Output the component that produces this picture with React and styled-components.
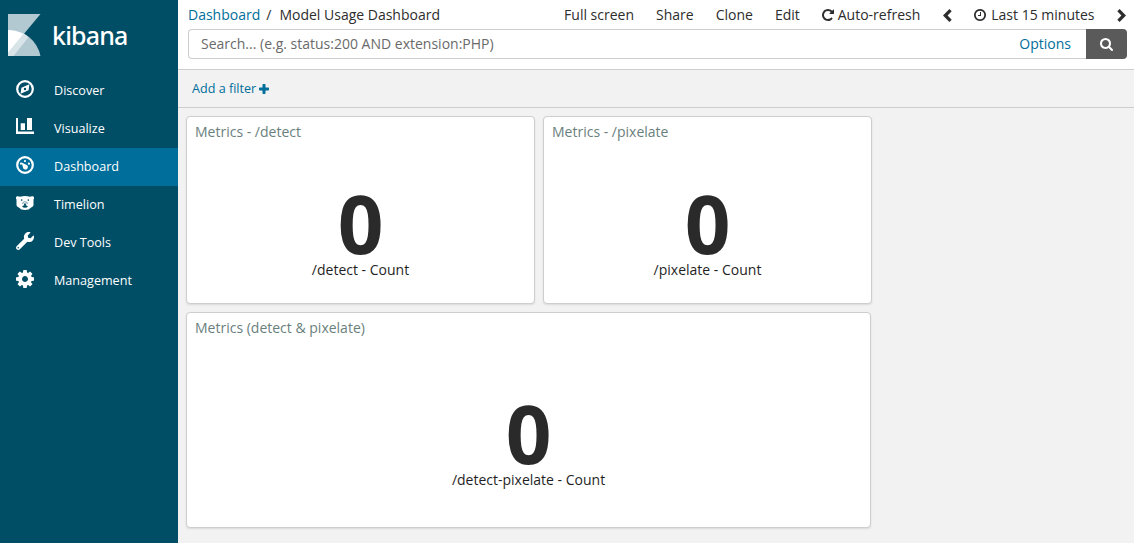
import React from 'react';
import styled, { createGlobalStyle } from 'styled-components';

const GlobalStyle = createGlobalStyle`
  * { box-sizing: border-box; }
  body {
    margin: 0;
    font-family: "Open Sans", "Liberation Sans", sans-serif;
    font-size: 14px;
    line-height: 20px;
    color: #2d2d2d;
    background: #f2f2f2;
  }
`;

const Shell = styled.div`
  display: flex;
  height: 543px;
  overflow: hidden;
`;

const Sidebar = styled.nav`
  width: 178px;
  flex: none;
  background: #004d66;
  color: #fff;
`;

const Brand = styled.div`
  display: flex;
  height: 72px;
  padding: 14px 0 0 8px;
  svg { display: block; flex: none; }
`;

const BrandName = styled.span`
  margin: 4px 0 0 11px;
  font-family: "Noto Sans", "Open Sans", sans-serif;
  font-size: 25px;
  line-height: 34px;
  font-weight: 500;
  letter-spacing: -0.85px;
`;

const NavItem = styled.a`
  display: flex;
  align-items: center;
  height: 38px;
  padding: 0 0 0 16px;
  font-size: 12.6px;
  background: ${(p) => (p.$active ? '#006e9a' : 'transparent')};
  svg { display: block; margin: 0 20px 4px 0; flex: none; }
`;

const Main = styled.main`
  flex: 1;
  min-width: 0;
`;

const TopNav = styled.header`
  height: 70px;
  padding: 0 7px 0 10px;
  background: #fff;
  border-bottom: 1px solid #cecece;
`;

const NavBar = styled.div`
  display: flex;
  justify-content: space-between;
  height: 29px;
  padding-top: 5px;
  white-space: pre;
`;

const Crumbs = styled.div`
  display: flex;
  gap: 6px;
`;

const Link = styled.a`
  color: #006e9a;
`;

const Separator = styled.span`
  margin-right: 2px;
`;

const Menu = styled.div`
  display: flex;
  align-items: center;
  height: 20px;
`;

const MenuItem = styled.span`
  display: flex;
  align-items: center;
  gap: ${(p) => p.$gap || 4}px;
  margin-right: ${(p) => p.$after}px;
  svg { display: block; }
`;

const SearchRow = styled.div`
  display: flex;
  height: 30px;
`;

const SearchBox = styled.div`
  flex: 1;
  display: flex;
  justify-content: space-between;
  align-items: center;
  padding: 0 15px 0 12px;
  border: 1px solid #cecece;
  border-right: 0;
  border-radius: 4px 0 0 4px;
  color: #6a6a6a;
`;

const SearchButton = styled.button`
  display: flex;
  align-items: center;
  justify-content: center;
  width: 41px;
  padding: 0;
  border: 0;
  border-radius: 0 4px 4px 0;
  background: #5a5a5a;
`;

const FilterBar = styled.div`
  display: flex;
  align-items: center;
  gap: 3px;
  height: 38px;
  padding-left: 14px;
  border-bottom: 1px solid #cecece;
  font-size: 12.6px;
  color: #006e9a;
`;

const Grid = styled.div`
  display: flex;
  flex-direction: column;
  gap: 8px;
  padding: 8px;
`;

const GridRow = styled.div`
  display: flex;
  gap: 8px;
`;

const Panel = styled.section`
  width: ${(p) => p.$w}px;
  height: ${(p) => p.$h}px;
  display: flex;
  flex-direction: column;
  background: #fff;
  border: 1px solid #cecece;
  border-radius: 4px;
  box-shadow: 0 1px 2px rgba(0, 0, 0, 0.1);
`;

const PanelTitle = styled.h2`
  margin: 0;
  padding: 5px 8px 0;
  height: 26px;
  font-size: 14px;
  line-height: 20px;
  font-weight: 400;
  color: #6a7f7d;
`;

const Metric = styled.div`
  flex: 1;
  display: flex;
  flex-direction: column;
  align-items: center;
  justify-content: center;
  padding-top: 19px;
`;

const Value = styled.div`
  font-size: 80px;
  line-height: 74px;
  font-weight: 700;
  color: #2a2a2a;
`;

const Label = styled.div`
  color: #1f1f1f;
`;

const NavIcon = ({ children, box = '0 0 18 18' }) => (
  <svg width="18" height="18" viewBox={box} fill="#fff">{children}</svg>
);

const Ring = () => <circle cx="9" cy="9" r="7.8" fill="none" stroke="#fff" strokeWidth="2.2" />;

const DiscoverIcon = () => (
  <NavIcon>
    <Ring />
    <path fillRule="evenodd" d="M13.400 4.200 12.600 10.300 4.600 13.800 5.400 7.700ZM9 7.800A1.200 1.200 0 1 0 9 10.200A1.200 1.200 0 1 0 9 7.800Z" />
  </NavIcon>
);

const VisualizeIcon = () => (
  <NavIcon>
    <path d="M0 0H2V13.6H18V16H0ZM4.7 5.2H9V12H4.7ZM11 0H16V12H11Z" />
  </NavIcon>
);

const DashboardIcon = () => (
  <NavIcon>
    <Ring />
    <circle cx="5" cy="7.7" r="1.1" />
    <circle cx="9" cy="5.1" r="1.1" />
    <circle cx="12.9" cy="7.7" r="1.1" />
    <path d="M5.600 6.600 10.800 9A2.500 2.500 0 1 1 7.300 12.400Z" />
  </NavIcon>
);

const TimelionIcon = () => (
  <NavIcon>
    <path d="M0 3.400Q.2 2 2 2.200L4 2.700Q9 1.400 14 2.700L16 2.200Q17.800 2 18 3.400Q18.200 4.800 17.500 5.600V11.200Q17.200 12.500 15.200 13.400Q13.200 16 9 16Q4.800 16 2.800 13.400Q.8 12.500 .5 11.200V5.600Q-.2 4.800 0 3.400Z" />
    <circle cx="5.700" cy="6.100" r=".8" fill="#004d66" />
    <circle cx="12.300" cy="6.100" r=".8" fill="#004d66" />
    <path d="M6.200 9.900Q6.500 7.700 9 7.700Q11.500 7.700 11.800 9.900" fill="none" stroke="#004d66" strokeWidth=".5" />
    <path d="M7.500 9.500H10.500L9.600 11.200Q11.600 11.300 11.900 12.600Q10.800 13.800 9 13.800Q7.200 13.800 6.100 12.600Q6.400 11.300 8.400 11.200Z" fill="#004d66" />
  </NavIcon>
);

const WrenchIcon = () => (
  <NavIcon box="0 0 512 512">
    <path d="M507.73 109.1c-2.24-9.03-13.54-12.09-20.12-5.51l-74.36 74.36-67.88-11.31-11.31-67.88 74.36-74.36c6.62-6.62 3.43-17.9-5.66-20.16-47.38-11.74-99.55.91-136.58 37.93-39.64 39.64-50.55 97.1-34.05 147.2L18.74 402.76c-24.99 24.99-24.99 65.51 0 90.5 24.99 24.99 65.51 24.99 90.5 0l213.21-213.21c50.12 16.71 107.47 5.68 147.37-34.22 37.07-37.07 49.7-89.32 37.91-136.73zM64 472c-13.25 0-24-10.75-24-24 0-13.26 10.75-24 24-24s24 10.74 24 24c0 13.25-10.75 24-24 24z" />
  </NavIcon>
);

const GearIcon = () => (
  <NavIcon box="128 128 1536 1536">
    <path d="M1152 896q0-106-75-181t-181-75-181 75-75 181 75 181 181 75 181-75 75-181zm512-109v222q0 12-8 23t-20 13l-185 28q-19 54-39 91 35 50 107 138 10 12 10 25t-9 23q-27 37-99 108t-94 71q-12 0-26-9l-138-108q-44 23-91 38-16 136-29 186-7 28-36 28h-222q-14 0-24.5-8.5t-11.5-21.5l-28-184q-49-16-90-37l-141 107q-10 9-25 9-14 0-25-11-126-114-165-168-7-10-7-23 0-12 8-23 15-21 51-66.5t54-70.5q-27-50-41-99l-183-27q-13-2-21-12.5t-8-23.5v-222q0-12 8-23t19-13l186-28q14-46 39-92-40-57-107-138-10-12-10-24 0-10 9-23 26-36 98.5-107.5t94.5-71.5q13 0 26 10l138 107q44-23 91-38 16-136 29-186 7-28 36-28h222q14 0 24.5 8.5t11.5 21.5l28 184q49 16 90 37l142-107q9-9 24-9 13 0 25 10 129 119 165 170 7 8 7 22 0 12-8 23-15 21-51 66.5t-54 70.5q26 50 41 98l183 28q13 2 21 12.5t8 23.5z" />
  </NavIcon>
);

const Logo = () => (
  <svg width="33" height="42" viewBox="0 0 33 42">
    <path d="M0 0H32.5L0 39Z" fill="#b2c9d1" />
    <path d="M0 16A32.5 32.5 0 0 1 32.5 42H0Z" fill="#b2c9d1" />
    <path d="M0 42V37.5L15.5 19.3Q18.6 21.2 20.5 23.3L5.5 42Z" fill="#d9e4e8" />
    <path d="M0 16Q8.500 16 15.5 19.800L0 38.500Z" fill="#fff" />
  </svg>
);

const RepeatIcon = () => (
  <svg width="12" height="12" viewBox="0 0 1536 1536" fill="#2d2d2d">
    <path d="M1536 128v448q0 26-19 45t-45 19h-448q-42 0-59-40-17-39 14-69l138-138q-148-137-349-137-104 0-198.5 40.5t-163.5 109.5-109.5 163.5-40.5 198.5 40.5 198.5 109.5 163.5 163.5 109.5 198.5 40.5q119 0 225-52t179-147q7-10 23-12 15 0 25 9l137 138q9 8 9.5 20.5t-7.5 22.5q-109 132-264 204.5t-327 72.5q-156 0-298-61t-245-164-164-245-61-298 61-298 164-245 245-164 298-61q147 0 284.5 55.5t244.5 156.5l130-129q29-31 70-14 39 17 39 59z" />
  </svg>
);

const ClockIcon = () => (
  <svg width="12" height="12" viewBox="128 128 1536 1536" fill="#2d2d2d">
    <path d="M1024 544v448q0 14-9 23t-23 9h-320q-14 0-23-9t-9-23v-64q0-14 9-23t23-9h224v-352q0-14 9-23t23-9h64q14 0 23 9t9 23zm416 352q0-148-73-273t-198-198-273-73-273 73-198 198-73 273 73 273 198 198 273 73 273-73 198-198 73-273zm224 0q0 209-103 385.5t-279.5 279.5-385.500 103-385.500-103-279.500-279.500-103-385.500 103-385.500 279.500-279.500 385.500-103 385.500 103 279.500 279.500 103 385.500z" />
  </svg>
);

const Chevron = ({ right }) => (
  <svg width="9" height="13" viewBox="0 0 9 13" fill="#2d2d2d">
    <path d={right ? 'M2.600 0 9 6.500 2.600 13 .3 10.700 4.400 6.500 .3 2.300Z' : 'M6.400 0 0 6.500 6.400 13 8.700 10.700 4.600 6.500 8.700 2.300Z'} />
  </svg>
);

const SearchIcon = () => (
  <svg width="13" height="13" viewBox="0 0 1664 1664" fill="#fff">
    <path d="M1152 704q0-185-131.5-316.5t-316.5-131.5-316.5 131.5-131.5 316.5 131.5 316.5 316.5 131.5 316.5-131.5 131.5-316.5zm512 832q0 52-38 90t-90 38q-54 0-90-38l-343-342q-179 124-399 124-143 0-273.5-55.5t-225-150-150-225-55.5-273.5 55.5-273.5 150-225 225-150 273.5-55.5 273.5 55.5 225 150 150 225 55.5 273.5q0 220-124 399l343 343q37 37 37 90z" />
  </svg>
);

const PlusIcon = () => (
  <svg width="10" height="10" viewBox="0 0 10 10" fill="#006e9a">
    <path d="M4.200 0H5.800Q6.500 0 6.500 .7V3.500H9.300Q10 3.500 10 4.200V5.800Q10 6.500 9.300 6.500H6.500V9.300Q6.500 10 5.800 10H4.200Q3.500 10 3.500 9.300V6.500H.7Q0 6.500 0 5.800V4.200Q0 3.500 .7 3.500H3.500V.7Q3.500 0 4.200 0Z" />
  </svg>
);

const navItems = [
  ['Discover', DiscoverIcon],
  ['Visualize', VisualizeIcon],
  ['Dashboard', DashboardIcon],
  ['Timelion', TimelionIcon],
  ['Dev Tools', WrenchIcon],
  ['Management', GearIcon],
];

const MetricPanel = ({ title, label, w, h }) => (
  <Panel $w={w} $h={h}>
    <PanelTitle>{title}</PanelTitle>
    <Metric>
      <Value>0</Value>
      <Label>{label}</Label>
    </Metric>
  </Panel>
);

export default function App() {
  return (
    <>
      <GlobalStyle />
      <Shell>
        <Sidebar>
          <Brand>
            <Logo />
            <BrandName>kibana</BrandName>
          </Brand>
          {navItems.map(([name, Icon]) => (
            <NavItem key={name} $active={name === 'Dashboard'}>
              <Icon />
              {name}
            </NavItem>
          ))}
        </Sidebar>
        <Main>
          <TopNav>
            <NavBar>
              <Crumbs>
                <Link>Dashboard</Link>
                <Separator>/</Separator>
                <span>Model Usage Dashboard</span>
              </Crumbs>
              <Menu>
                <MenuItem $after={22}>Full screen</MenuItem>
                <MenuItem $after={22}>Share</MenuItem>
                <MenuItem $after={22}>Clone</MenuItem>
                <MenuItem $after={22}>Edit</MenuItem>
                <MenuItem $after={23}><RepeatIcon />Auto-refresh</MenuItem>
                <MenuItem $after={22}><Chevron /></MenuItem>
                <MenuItem $after={22} $gap={5}><ClockIcon />Last 15 minutes</MenuItem>
                <MenuItem $after={1.5}><Chevron right /></MenuItem>
              </Menu>
            </NavBar>
            <SearchRow>
              <SearchBox>
                <span>Search... (e.g. status:200 AND extension:PHP)</span>
                <Link>Options</Link>
              </SearchBox>
              <SearchButton aria-label="Search"><SearchIcon /></SearchButton>
            </SearchRow>
          </TopNav>
          <FilterBar>
            <span>Add a filter</span>
            <PlusIcon />
          </FilterBar>
          <Grid>
            <GridRow>
              <MetricPanel title="Metrics - /detect" label="/detect - Count" w={349} h={188} />
              <MetricPanel title="Metrics - /pixelate" label="/pixelate - Count" w={329} h={188} />
            </GridRow>
            <GridRow>
              <MetricPanel title="Metrics (detect &amp; pixelate)" label="/detect-pixelate - Count" w={685} h={216} />
            </GridRow>
          </Grid>
        </Main>
      </Shell>
    </>
  );
}
